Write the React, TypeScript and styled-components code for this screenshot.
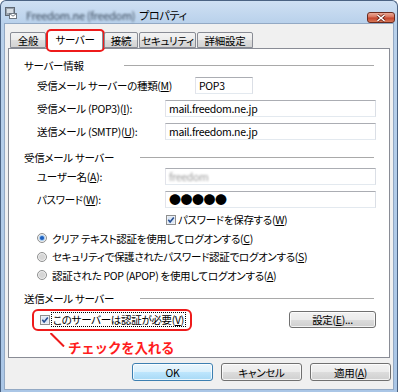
import styled, { createGlobalStyle } from 'styled-components';

const GlobalStyle = createGlobalStyle`
  html, body {
    margin: 0;
    padding: 0;
    background: #ffffff;
  }
  body {
    font-family: 'Noto Sans CJK JP', 'Noto Sans', sans-serif;
    font-size: 10.5px;
    letter-spacing: -0.3px;
    font-feature-settings: 'palt';
    color: #000;
  }
`;

const Window = styled.div`
  width: 398px;
  height: 392px;
  box-sizing: border-box;
  border: 1px solid #4b6383;
  border-bottom: none;
  border-radius: 6px 6px 0 0;
  background: linear-gradient(to bottom, #cfe0f3 0px, #b9d1eb 22px, #aac6e6 100%);
  display: flex;
  flex-direction: column;
  overflow: hidden;
`;

const TitleBar = styled.div`
  height: 22px;
  flex-shrink: 0;
  display: flex;
  align-items: center;
  padding: 0 2px 0 4px;
`;

const TitleIcon = styled.svg`
  flex-shrink: 0;
  margin-top: 1px;
`;

const TitleText = styled.div`
  margin-left: 9px;
  margin-top: 6px;
  font-size: 11px;
  line-height: 16px;
  white-space: nowrap;
`;

const Blurred = styled.span<{ $color?: string }>`
  filter: blur(1.3px);
  color: ${({ $color }) => $color || '#3a4a5c'};
  margin-right: 4px;
`;

const CloseButton = styled.div`
  margin-left: auto;
  align-self: flex-end;
  width: 28px;
  height: 11px;
  box-sizing: border-box;
  border: 1px solid #6a2a1e;
  border-radius: 3px;
  background: linear-gradient(#eaa996, #d8735c 45%, #c4432b 55%, #d87a5a);
  display: flex;
  align-items: center;
  justify-content: center;
`;

const Client = styled.div`
  flex: 1;
  margin: 0 3px 2px 3px;
  border: 1px solid #93a9c4;
  background: #f0f0f0;
  padding: 0 3px 0 3px;
  display: flex;
  flex-direction: column;
`;

const TabStrip = styled.div`
  height: 18px;
  margin-top: 6px;
  padding-left: 2px;
  display: flex;
  align-items: flex-end;
  gap: 1px;
  position: relative;
  z-index: 2;
`;

const Tab = styled.div<{ $width: number; $active?: boolean }>`
  position: relative;
  width: ${({ $width }) => $width}px;
  height: ${({ $active }) => ($active ? 19 : 16)}px;
  margin-bottom: ${({ $active }) => ($active ? -1 : 0)}px;
  box-sizing: border-box;
  border: 1px solid #898c95;
  border-bottom: ${({ $active }) => ($active ? 'none' : '1px solid #898c95')};
  border-radius: 2px 2px 0 0;
  background: ${({ $active }) =>
    $active ? '#ffffff' : 'linear-gradient(#f3f3f3, #ebebeb 50%, #dedede 50%, #d3d3d3)'};
  display: flex;
  align-items: center;
  justify-content: center;
  padding-bottom: ${({ $active }) => ($active ? 2 : 0)}px;
  white-space: nowrap;
`;

const TabMark = styled.span`
  position: absolute;
  left: -2px;
  right: -3px;
  top: -2px;
  bottom: -3px;
  border: 2px solid #ee1b1b;
  border-radius: 5px;
`;

const Panel = styled.div`
  position: relative;
  z-index: 1;
  height: 310px;
  box-sizing: border-box;
  border: 1px solid #898c95;
  background: #ffffff;
  padding: 8px 13px 0 15px;
  display: flex;
  flex-direction: column;
`;

const SectionHeader = styled.div<{ $top: number }>`
  height: 16px;
  margin-top: ${({ $top }) => $top}px;
  display: flex;
  align-items: center;
`;

const SectionTitle = styled.div<{ $width: number }>`
  width: ${({ $width }) => $width}px;
  flex-shrink: 0;
  white-space: nowrap;
`;

const Rule = styled.div`
  flex: 1;
  height: 1px;
  margin-right: 2px;
  background: #a9a9a9;
`;

const Row = styled.div<{ $top: number; $indent?: number; $height?: number }>`
  height: ${({ $height }) => $height || 17}px;
  margin-top: ${({ $top }) => $top}px;
  padding-left: ${({ $indent }) => ($indent === undefined ? 13 : $indent)}px;
  display: flex;
  align-items: center;
`;

const Label = styled.div<{ $width: number }>`
  width: ${({ $width }) => $width}px;
  flex-shrink: 0;
  white-space: nowrap;
`;

const TextBox = styled.div<{ $width?: number }>`
  ${({ $width }) => ($width ? `width: ${$width}px;` : 'flex: 1;')}
  height: 17px;
  box-sizing: border-box;
  border: 1px solid;
  border-color: #abadb3 #dbdfe6 #e3e9ef #e2e3ea;
  background: #ffffff;
  padding: 0 3px;
  line-height: 15px;
  white-space: nowrap;
  overflow: hidden;
`;

const Dots = styled.span`
  font-size: 12px;
  letter-spacing: -0.5px;
  line-height: 15px;
`;

const Choice = styled.div<{ $gap: number }>`
  position: relative;
  display: inline-flex;
  align-items: center;
  gap: ${({ $gap }) => $gap}px;
  white-space: nowrap;
`;

const FocusText = styled.span`
  outline: 1px dotted #000;
  outline-offset: 0;
  padding: 0 1px;
  line-height: 13px;
`;

const ChoiceMark = styled.span`
  position: absolute;
  left: -8px;
  right: -7px;
  top: -4px;
  bottom: -5px;
  border: 2px solid #ee1b1b;
  border-radius: 6px;
`;

const Button = styled.div<{ $width: number; $height?: number; $default?: boolean }>`
  width: ${({ $width }) => $width}px;
  height: ${({ $height }) => $height || 18}px;
  box-sizing: border-box;
  flex-shrink: 0;
  border: 1px solid ${({ $default }) => ($default ? '#3c7fb1' : '#707070')};
  border-radius: 3px;
  background: ${({ $default }) =>
    $default
      ? 'linear-gradient(#eaf6fd, #d9f0fc 50%, #bee6fd 50%, #a7d9f5)'
      : 'linear-gradient(#f2f2f2, #ebebeb 50%, #dddddd 50%, #cfcfcf)'};
  box-shadow: inset 0 0 0 1px rgba(255, 255, 255, 0.75);
  display: flex;
  align-items: center;
  justify-content: center;
  white-space: nowrap;
`;

const PushRight = styled.div`
  margin-left: auto;
`;

const Callout = styled.div`
  height: 22px;
  margin-top: 5px;
  padding-left: 26px;
  display: flex;
  align-items: flex-start;
`;

const CalloutText = styled.div`
  margin-left: 3px;
  margin-top: 6px;
  font-size: 13.5px;
  font-weight: 700;
  line-height: 16px;
  color: #ff1d1d;
  font-feature-settings: normal;
  letter-spacing: -0.2px;
`;

const ButtonBar = styled.div`
  margin-top: 5px;
  margin-right: -1px;
  display: flex;
  justify-content: flex-end;
  gap: 8px;
`;

function CheckBox() {
  return (
    <svg width="10" height="10" viewBox="0 0 10 10">
      <rect x="0.5" y="0.5" width="9" height="9" fill="#f6f6f6" stroke="#8e8f8f" />
      <rect x="1.5" y="1.5" width="7" height="7" fill="#dde8f5" />
      <path d="M2.3 4.8 L4.1 6.9 L7.8 2.4" stroke="#274e91" strokeWidth="1.6" fill="none" />
    </svg>
  );
}

function Radio({ checked }: { checked?: boolean }) {
  return (
    <svg width="10" height="10" viewBox="0 0 10 10">
      <circle cx="5" cy="5" r="4.5" fill="#eeeeee" stroke="#8e8f8f" />
      {checked ? (
        <>
          <circle cx="5" cy="5" r="3" fill="#a9cdf0" />
          <circle cx="5" cy="5" r="2.1" fill="#1c5fbf" />
        </>
      ) : (
        <circle cx="5" cy="5" r="3" fill="#d6d6d6" />
      )}
    </svg>
  );
}

export default function App() {
  return (
    <>
      <GlobalStyle />
      <Window>
        <TitleBar>
          <TitleIcon width="12" height="12" viewBox="0 0 12 12">
            <rect x="0.5" y="0.5" width="9" height="8" fill="#9aa3ad" stroke="#5f6873" />
            <rect x="2" y="2" width="6" height="4" fill="#d7dde3" />
            <rect x="4.5" y="6.5" width="7" height="5" fill="#ffffff" stroke="#6d7782" />
            <path d="M4.5 6.5 L8 9.2 L11.5 6.5" stroke="#6d7782" fill="none" />
          </TitleIcon>
          <TitleText>
            <Blurred>Freedom.ne (freedom)</Blurred>プロパティ
          </TitleText>
          <CloseButton>
            <svg width="12" height="8" viewBox="0 0 12 8">
              <path d="M2.5 1 L9.5 7 M9.5 1 L2.5 7" stroke="#6a2418" strokeWidth="3" />
              <path d="M2.5 1 L9.5 7 M9.5 1 L2.5 7" stroke="#ffffff" strokeWidth="1.6" />
            </svg>
          </CloseButton>
        </TitleBar>
        <Client>
          <TabStrip>
            <Tab $width={36}>全般</Tab>
            <Tab $width={56} $active>
              サーバー
              <TabMark />
            </Tab>
            <Tab $width={34}>接続</Tab>
            <Tab $width={57}>セキュリティ</Tab>
            <Tab $width={56}>詳細設定</Tab>
          </TabStrip>
          <Panel>
            <SectionHeader $top={0}>
              <SectionTitle $width={100}>サーバー情報</SectionTitle>
              <Rule />
            </SectionHeader>
            <Row $top={4}>
              <Label $width={158}>
                受信メール サーバーの種類(<u>M</u>)
              </Label>
              <TextBox $width={58}>POP3</TextBox>
            </Row>
            <Row $top={6}>
              <Label $width={128}>
                受信メール (POP3)(<u>I</u>):
              </Label>
              <TextBox>mail.freedom.ne.jp</TextBox>
            </Row>
            <Row $top={6}>
              <Label $width={128}>
                送信メール (SMTP)(<u>U</u>):
              </Label>
              <TextBox>mail.freedom.ne.jp</TextBox>
            </Row>

            <SectionHeader $top={9}>
              <SectionTitle $width={116}>受信メール サーバー</SectionTitle>
              <Rule />
            </SectionHeader>
            <Row $top={3}>
              <Label $width={128}>
                ユーザー名(<u>A</u>):
              </Label>
              <TextBox>
                <Blurred $color="#9a9a9a">freedom</Blurred>
              </TextBox>
            </Row>
            <Row $top={6}>
              <Label $width={128}>
                パスワード(<u>W</u>):
              </Label>
              <TextBox>
                <Dots>●●●●●</Dots>
              </TextBox>
            </Row>
            <Row $top={3} $indent={142}>
              <Choice $gap={2}>
                <CheckBox />
                <span>
                  パスワードを保存する(<u>W</u>)
                </span>
              </Choice>
            </Row>
            <Row $top={1} $height={18.5}>
              <Choice $gap={5}>
                <Radio checked />
                <span>
                  クリア テキスト認証を使用してログオンする(<u>C</u>)
                </span>
              </Choice>
            </Row>
            <Row $top={0} $height={18.5}>
              <Choice $gap={5}>
                <Radio />
                <span>
                  セキュリティで保護されたパスワード認証でログオンする(<u>S</u>)
                </span>
              </Choice>
            </Row>
            <Row $top={0} $height={18.5}>
              <Choice $gap={5}>
                <Radio />
                <span>
                  認証された POP (APOP) を使用してログオンする(<u>A</u>)
                </span>
              </Choice>
            </Row>

            <SectionHeader $top={5.5}>
              <SectionTitle $width={116}>送信メール サーバー</SectionTitle>
              <Rule />
            </SectionHeader>
            <Row $top={5} $indent={16}>
              <Choice $gap={2}>
                <CheckBox />
                <FocusText>
                  このサーバーは認証が必要(<u>V</u>)
                </FocusText>
                <ChoiceMark />
              </Choice>
              <PushRight>
                <Button $width={87} $height={17}>
                  設定(<u>E</u>)...
                </Button>
              </PushRight>
            </Row>
            <Callout>
              <svg width="15" height="14" viewBox="0 0 15 14">
                <path d="M0.5 0 L14 13.5" stroke="#ee1b1b" strokeWidth="2" />
              </svg>
              <CalloutText>チェックを入れる</CalloutText>
            </Callout>
          </Panel>
          <ButtonBar>
            <Button $width={81} $default>
              OK
            </Button>
            <Button $width={81}>キャンセル</Button>
            <Button $width={81}>
              適用(<u>A</u>)
            </Button>
          </ButtonBar>
        </Client>
      </Window>
    </>
  );
}
